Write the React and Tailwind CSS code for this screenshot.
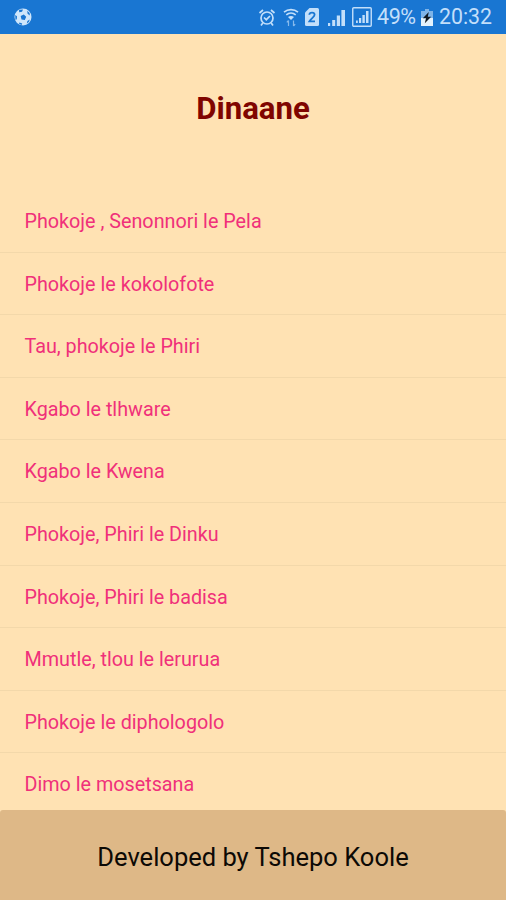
const stories = [
    'Phokoje , Senonnori le Pela',
    'Phokoje le kokolofote',
    'Tau, phokoje le Phiri',
    'Kgabo le tlhware',
    'Kgabo le Kwena',
    'Phokoje, Phiri le Dinku',
    'Phokoje, Phiri le badisa',
    'Mmutle, tlou le lerurua',
    'Phokoje le diphologolo',
    'Dimo le mosetsana',
];

const BallIcon = () => (
    <svg width="18" height="18" viewBox="0 0 18 18">
        <circle cx="9" cy="9" r="8.5" fill="#cfe6fb" />
        <path
            d="M6.7 8L9.8 6.6L12.2 8.8L10.8 12L7.5 11.5ZM5 1.8L9 1.6L8 3.8L5.2 4.2ZM1.2 7L3 8.2L2.8 11.3L1.5 12ZM13.2 2.8L15.6 5L15.8 7.4L13.6 5.8ZM5.5 14.4L8.2 15.5L7.6 17L5 15.8ZM13.4 13L15.8 11.4L14.8 14L12.8 15.6Z"
            fill="#1976d2"
        />
    </svg>
);

const AlarmIcon = () => (
    <svg width="18" height="19" viewBox="0 0 18 19" fill="none" stroke="currentColor" strokeWidth="1.7">
        <circle cx="9" cy="10" r="6" />
        <path d="M1.5 5L5 2M16.5 5L13 2M4.8 15L3 17.5M13.2 15L15 17.5" />
        <path d="M6 9.5L8.3 11.7L12 8" />
    </svg>
);

const WifiIcon = () => (
    <svg width="16" height="19" viewBox="0 0 16 19" fill="none" stroke="currentColor" strokeWidth="1.6">
        <path d="M1 4.2C5 .8 11 .8 15 4.2M3.3 6.8C6 4.6 10 4.6 12.7 6.8" />
        <path d="M5 9C6.8 7.6 9.2 7.6 11 9L8 12Z" fill="currentColor" stroke="none" />
        <path d="M5.5 18V12.5M3.8 14.3L5.5 12.5M10.5 12.5V18M12.2 16.2L10.5 18" strokeWidth="1.2" opacity=".65" />
    </svg>
);

const SimIcon = () => (
    <svg width="14" height="18" viewBox="0 0 14 18">
        <path d="M4.5 0H12.5Q14 0 14 1.5V16.5Q14 18 12.5 18H1.5Q0 18 0 16.5V4.5Z" fill="currentColor" />
        <path d="M4.3 6.7C4.5 3.9 9.6 3.8 9.6 6.8C9.6 9 5.8 10.5 4.3 13.4H10" fill="none" stroke="#1976d2" strokeWidth="1.8" />
    </svg>
);

const SignalIcon = () => (
    <svg width="17" height="17" viewBox="0 0 17 17" fill="currentColor">
        <path d="M0 14H2.2V17H0ZM4.2 11H7.2V17H4.2ZM8.8 6.5H12V17H8.8ZM13.4 1H17V17H13.4Z" />
    </svg>
);

const BoxedSignalIcon = () => (
    <svg width="20" height="20" viewBox="0 0 20 20" fill="currentColor">
        <rect x=".75" y=".75" width="18.5" height="18.5" rx="1" fill="none" stroke="currentColor" strokeWidth="1.4" />
        <path d="M4 13.5H5.8V16H4ZM7 11H9.2V16H7ZM10.4 8H12.8V16H10.4ZM14 4H16.5V16H14Z" />
    </svg>
);

const BatteryIcon = () => (
    <svg width="12" height="17" viewBox="0 0 12 17">
        <path d="M4 0H8V2H12V17H0V2H4Z" fill="#7fb4e8" />
        <path d="M0 9H12V17H0Z" fill="#e3f2fd" />
        <path d="M7.8 3L1.8 9.2H5L3.8 14.2L10.2 7.7H6.8Z" fill="#101820" />
    </svg>
);

const StatusBar = () => (
    <div className="flex h-[34px] shrink-0 items-center bg-[#1976d2] pl-[14px] pr-[15px] text-[#c3dffa]">
        <BallIcon />
        <div className="ml-auto flex items-center">
            <AlarmIcon />
            <div className="ml-[7px]"><WifiIcon /></div>
            <div className="ml-[6px]"><SimIcon /></div>
            <div className="ml-[9px]"><SignalIcon /></div>
            <div className="ml-[7px]"><BoxedSignalIcon /></div>
            <span className="ml-[5px] w-[40px] whitespace-nowrap text-[21.5px] leading-none tracking-[-0.4px]">49%</span>
            <div className="ml-[4px]"><BatteryIcon /></div>
            <span className="ml-[6px] w-[52px] whitespace-nowrap text-[21.3px] leading-none">20:32</span>
        </div>
    </div>
);

const App = () => {
    return (
        <div className="flex h-screen flex-col overflow-hidden bg-[#ffe2b3] font-['Roboto',sans-serif]">
            <StatusBar />

            <h1 className="flex h-[156px] shrink-0 items-center justify-center pb-[7px] text-[31.2px] font-bold leading-none text-[#800500]">
                Dinaane
            </h1>

            {/* Story list */}
            <ul className="min-h-0 flex-1 overflow-hidden">
                {stories.map((story) => (
                    <li
                        key={story}
                        className="flex h-[62.6px] items-center border-b border-[#f3d8aa] pl-[24.5px] pt-[2px] text-[19.75px] text-[#f0307a]"
                    >
                        {story}
                    </li>
                ))}
            </ul>

            {/* Footer */}
            <button className="flex h-[90px] shrink-0 items-center justify-center rounded-t-[3px] bg-[#deb887] pt-[4px] text-[25.5px] text-[#0c0905]">
                Developed by Tshepo Koole
            </button>
        </div>
    );
};

export default App;
